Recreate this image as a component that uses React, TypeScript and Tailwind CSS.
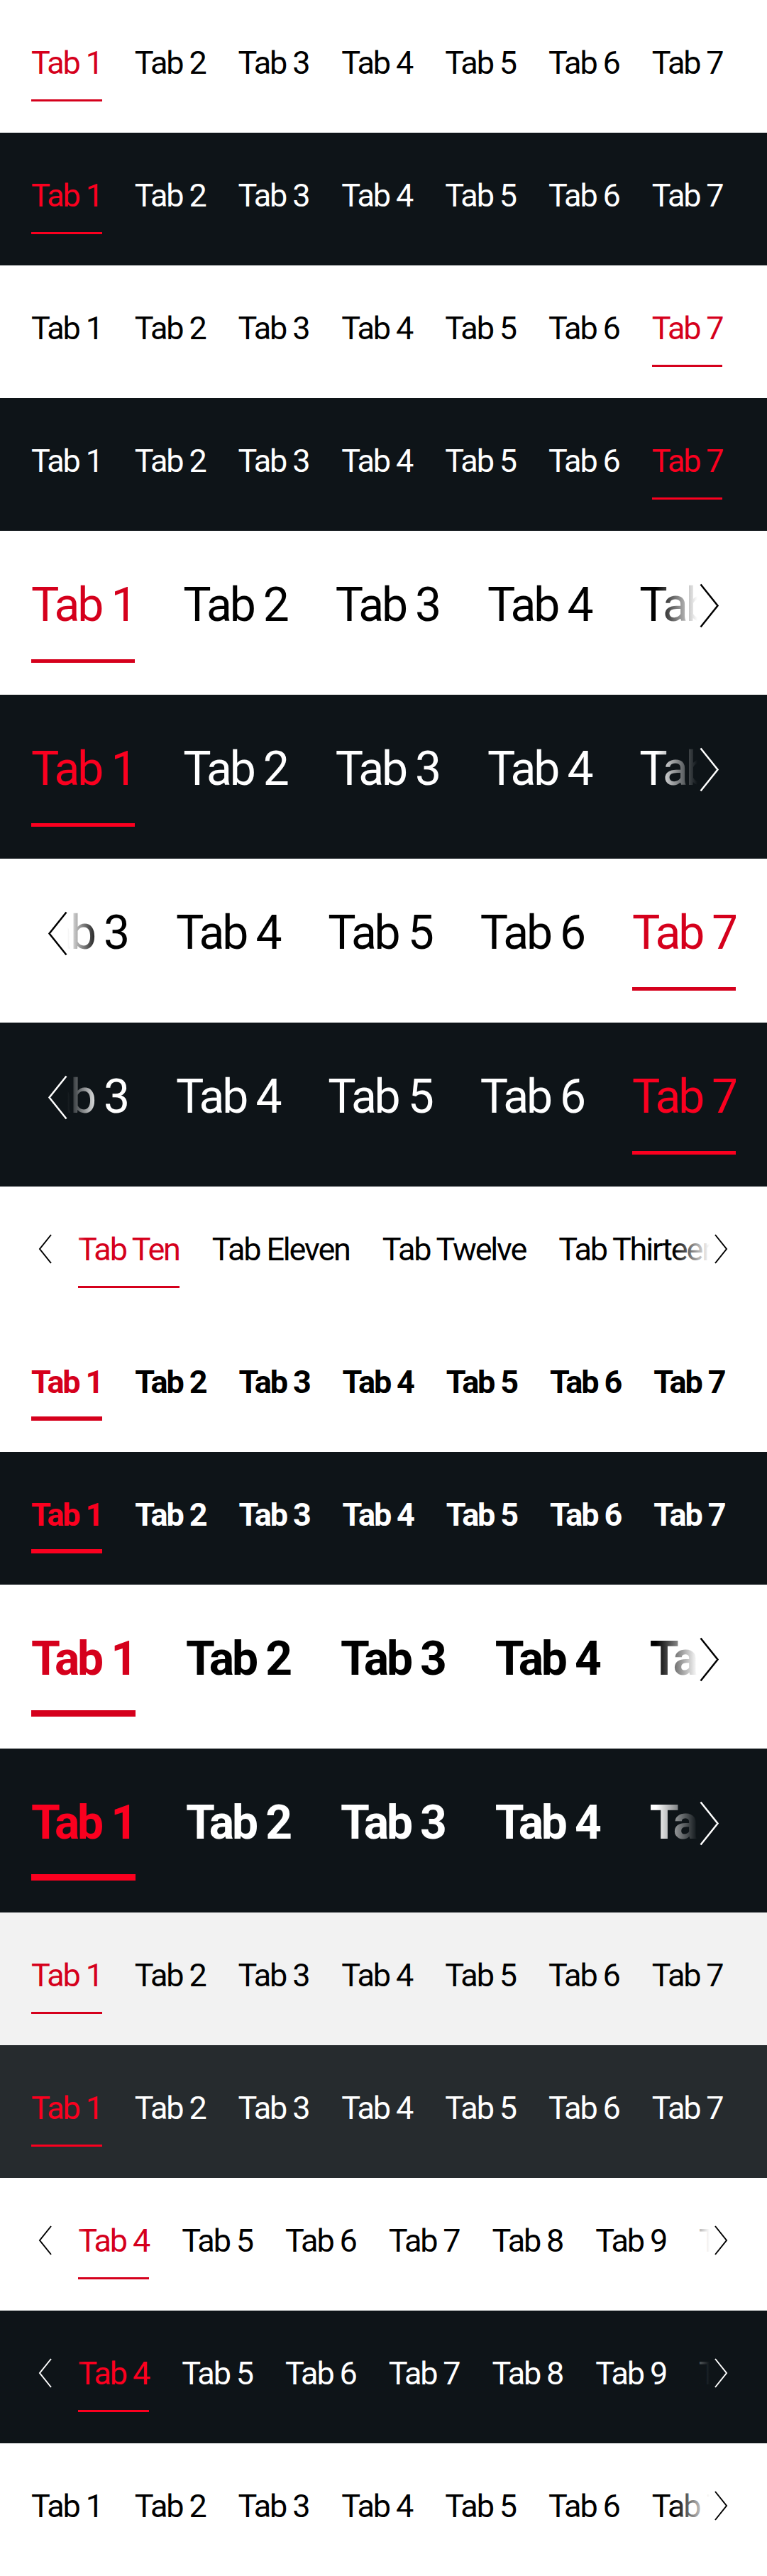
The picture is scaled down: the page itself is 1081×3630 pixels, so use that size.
import React, { useLayoutEffect, useRef } from 'react';

type Theme = 'light' | 'dark' | 'lightGray' | 'darkGray';
type Size = 'small' | 'medium';
type Weight = 'regular' | 'semibold';

interface TabsBarProps {
  theme: Theme;
  size?: Size;
  weight?: Weight;
  tabs: string[];
  activeIndex: number;
  // 'end' scrolls to the last tab, a number puts the active tab at that x offset
  scroll?: 'end' | number;
  prev?: boolean;
  next?: boolean;
}

const THEMES = {
  light: {
    bg: 'bg-white',
    text: 'text-black',
    active: 'text-[#d5001c]',
    bar: 'bg-[#d5001c]',
    solid: 'bg-white',
    fadeRight: 'bg-linear-to-r from-white/0 to-white',
    fadeLeft: 'bg-linear-to-l from-white/0 to-white',
    icon: 'text-black',
  },
  lightGray: {
    bg: 'bg-[#f2f2f2]',
    text: 'text-black',
    active: 'text-[#d5001c]',
    bar: 'bg-[#d5001c]',
    solid: 'bg-[#f2f2f2]',
    fadeRight: 'bg-linear-to-r from-[#f2f2f2]/0 to-[#f2f2f2]',
    fadeLeft: 'bg-linear-to-l from-[#f2f2f2]/0 to-[#f2f2f2]',
    icon: 'text-black',
  },
  dark: {
    bg: 'bg-[#0e1418]',
    text: 'text-white',
    active: 'text-[#fb001f]',
    bar: 'bg-[#fb001f]',
    solid: 'bg-[#0e1418]',
    fadeRight: 'bg-linear-to-r from-[#0e1418]/0 to-[#0e1418]',
    fadeLeft: 'bg-linear-to-l from-[#0e1418]/0 to-[#0e1418]',
    icon: 'text-white',
  },
  darkGray: {
    bg: 'bg-[#262b2e]',
    text: 'text-white',
    active: 'text-[#fb001f]',
    bar: 'bg-[#fb001f]',
    solid: 'bg-[#262b2e]',
    fadeRight: 'bg-linear-to-r from-[#262b2e]/0 to-[#262b2e]',
    fadeLeft: 'bg-linear-to-l from-[#262b2e]/0 to-[#262b2e]',
    icon: 'text-white',
  },
};

const SIZES = {
  small: {
    section: 'h-[187px] pt-[61px]',
    label: 'text-[45px] leading-[56px] tracking-[-0.048em]',
    line: 'h-[56px]',
    barWrap: 'mt-[20px] h-[6px]',
    barRegular: 'h-[3px]',
    barBold: 'h-[6px]',
    gapRegular: 'gap-[46px]',
    gapBold: 'gap-[46px]',
    nextSolid: 'w-[37px] pr-[11px] pb-[2px]',
    nextFade: 'w-[50px]',
    prevSolid: 'w-[36px] pl-[10px] pb-[2px]',
    prevFade: 'w-[40px]',
    icon: { w: 20, h: 44, stroke: 2 },
  },
  medium: {
    section: 'h-[231px] pt-[63px]',
    label: 'text-[66px] leading-[84px] tracking-[-0.048em]',
    line: 'h-[84px]',
    barWrap: 'mt-[30px] h-[9px]',
    barRegular: 'h-[5px]',
    barBold: 'h-[9px]',
    gapRegular: 'gap-[68px]',
    gapBold: 'gap-[71px]',
    nextSolid: 'w-[54px] pr-[23px]',
    nextFade: 'w-[58px]',
    prevSolid: 'w-[51px] pl-[23px]',
    prevFade: 'w-[45px]',
    icon: { w: 29, h: 65, stroke: 2.5 },
  },
};

const Chevron = ({ dir, w, h, stroke }: { dir: 'left' | 'right'; w: number; h: number; stroke: number }) => {
  const pad = stroke;
  const points =
    dir === 'right'
      ? `${pad},${pad} ${w - pad},${h / 2} ${pad},${h - pad}`
      : `${w - pad},${pad} ${pad},${h / 2} ${w - pad},${h - pad}`;
  return (
    <svg width={w} height={h} viewBox={`0 0 ${w} ${h}`} fill="none" className="shrink-0">
      <polyline points={points} stroke="currentColor" strokeWidth={stroke} strokeLinejoin="miter" />
    </svg>
  );
};

const TabsBar: React.FC<TabsBarProps> = ({
  theme,
  size = 'small',
  weight = 'regular',
  tabs,
  activeIndex,
  scroll,
  prev,
  next,
}) => {
  const t = THEMES[theme];
  const s = SIZES[size];
  const bold = weight === 'semibold';
  const scrollRef = useRef<HTMLDivElement>(null);

  useLayoutEffect(() => {
    const el = scrollRef.current;
    if (!el || scroll === undefined) return;
    if (scroll === 'end') {
      el.scrollLeft = el.scrollWidth;
      return;
    }
    const row = el.firstElementChild as HTMLElement;
    const tab = row.children[activeIndex] as HTMLElement;
    el.scrollLeft = tab.offsetLeft - scroll;
  }, [scroll, activeIndex]);

  return (
    <section className={`${t.bg} ${s.section} px-[44px]`}>
      <div className="relative">
        <div ref={scrollRef} className="overflow-hidden">
          <div className={`flex w-max ${bold ? s.gapBold : s.gapRegular}`}>
            {tabs.map((label, index) => {
              const isActive = index === activeIndex;
              return (
                <button key={label} type="button" className="flex shrink-0 flex-col items-stretch text-left">
                  <span
                    className={`whitespace-nowrap ${s.label} ${bold ? 'font-bold' : 'font-normal'} ${
                      isActive ? t.active : t.text
                    }`}
                  >
                    {label}
                  </span>
                  <span className={`flex items-end ${s.barWrap}`}>
                    <span
                      className={`block w-full ${bold ? s.barBold : s.barRegular} ${
                        isActive ? t.bar : 'bg-transparent'
                      }`}
                    />
                  </span>
                </button>
              );
            })}
          </div>
        </div>

        {prev && (
          <div className={`absolute left-0 top-0 flex ${s.line}`}>
            <div className={`flex h-full items-center ${t.solid} ${t.icon} ${s.prevSolid}`}>
              <Chevron dir="left" {...s.icon} />
            </div>
            <div className={`h-full ${t.fadeLeft} ${s.prevFade}`} />
          </div>
        )}

        {next && (
          <div className={`absolute right-0 top-0 flex ${s.line}`}>
            <div className={`h-full ${t.fadeRight} ${s.nextFade}`} />
            <div className={`flex h-full items-center justify-end ${t.solid} ${t.icon} ${s.nextSolid}`}>
              <Chevron dir="right" {...s.icon} />
            </div>
          </div>
        )}
      </div>
    </section>
  );
};

const SEVEN = ['Tab 1', 'Tab 2', 'Tab 3', 'Tab 4', 'Tab 5', 'Tab 6', 'Tab 7'];
const EIGHT = [...SEVEN, 'Tab 8'];
const TWELVE = [...EIGHT, 'Tab 9', 'Tab 10', 'Tab 11', 'Tab 12'];
const WORDS = [
  'Tab One',
  'Tab Two',
  'Tab Three',
  'Tab Four',
  'Tab Five',
  'Tab Six',
  'Tab Seven',
  'Tab Eight',
  'Tab Nine',
  'Tab Ten',
  'Tab Eleven',
  'Tab Twelve',
  'Tab Thirteen',
  'Tab Fourteen',
  'Tab Fifteen',
];

export default function App() {
  return (
    <div className="w-[1081px] [font-family:Roboto,'Liberation_Sans',sans-serif]">
      <TabsBar theme="light" tabs={SEVEN} activeIndex={0} />
      <TabsBar theme="dark" tabs={SEVEN} activeIndex={0} />
      <TabsBar theme="light" tabs={SEVEN} activeIndex={6} />
      <TabsBar theme="dark" tabs={SEVEN} activeIndex={6} />

      <TabsBar theme="light" size="medium" tabs={SEVEN} activeIndex={0} next />
      <TabsBar theme="dark" size="medium" tabs={SEVEN} activeIndex={0} next />
      <TabsBar theme="light" size="medium" tabs={SEVEN} activeIndex={6} scroll="end" prev />
      <TabsBar theme="dark" size="medium" tabs={SEVEN} activeIndex={6} scroll="end" prev />

      <TabsBar theme="light" tabs={WORDS} activeIndex={9} scroll={66} prev next />

      <TabsBar theme="light" weight="semibold" tabs={SEVEN} activeIndex={0} />
      <TabsBar theme="dark" weight="semibold" tabs={SEVEN} activeIndex={0} />
      <TabsBar theme="light" size="medium" weight="semibold" tabs={SEVEN} activeIndex={0} next />
      <TabsBar theme="dark" size="medium" weight="semibold" tabs={SEVEN} activeIndex={0} next />

      <TabsBar theme="lightGray" tabs={SEVEN} activeIndex={0} />
      <TabsBar theme="darkGray" tabs={SEVEN} activeIndex={0} />

      <TabsBar theme="light" tabs={TWELVE} activeIndex={3} scroll={66} prev next />
      <TabsBar theme="dark" tabs={TWELVE} activeIndex={3} scroll={66} prev next />

      <TabsBar theme="light" tabs={EIGHT} activeIndex={-1} next />
    </div>
  );
}
